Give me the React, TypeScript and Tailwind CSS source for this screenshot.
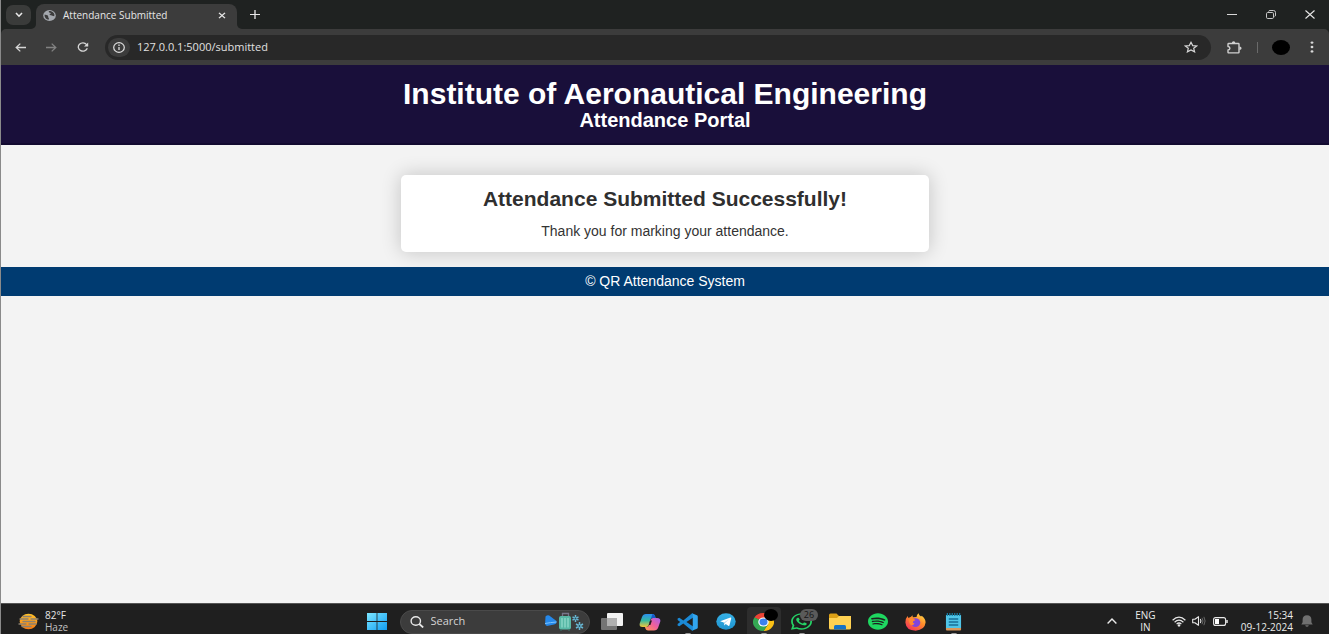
import React from 'react';
import { FaWhatsapp, FaSpotify } from 'react-icons/fa';

type Box = { className?: string; children: React.ReactNode; viewBox: string };

function Glyph({ className, children, viewBox }: Box) {
  return (
    <svg
      className={'block shrink-0 ' + (className ?? '')}
      viewBox={viewBox}
      preserveAspectRatio="none"
      fill="none"
      aria-hidden="true"
    >
      {children}
    </svg>
  );
}

function TabStrip() {
  return (
    <div className="flex h-[29px] items-stretch bg-[#1f2221] pl-[5px]">
      <button
        aria-label="Search tabs"
        className="mt-[5px] flex h-5 w-[25px] items-center justify-center rounded-[7px] bg-[#3a3b3a]"
      >
        <Glyph viewBox="0 0 8 6" className="h-[6px] w-2">
          <path d="M1 1l3 3.2L7 1" stroke="#e8e8e8" strokeWidth="1.6" />
        </Glyph>
      </button>
      <div className="flex w-[5px] items-end overflow-hidden bg-[#3c3c3c]">
        <span className="h-full w-full rounded-br-[5px] bg-[#1f2221]" />
      </div>
      <div className="flex bg-[#1f2221] pt-1">
        <div className="flex w-[201px] items-center rounded-t-[8px] bg-[#3c3c3c] pr-2 pb-[3px] pl-[7px]">
          <Glyph viewBox="0 0 14 12" className="h-[11px] w-[13px]">
            <ellipse cx="7" cy="6" rx="6.8" ry="5.9" fill="#a4a8ae" />
            <path d="M1.6 5.2c1.5.2 3 .2 3.8 1 .6.7-.4 1.4.4 2 .8.5.6 1.4.2 2.4C3.500 10.400 1.600 8.500 1.600 5.200z" fill="#3c3c3c" />
            <path d="M6.300 1.200c-.2 1.200 .2 1.800 1.400 1.700 1.200 0 .9 1-.2 1.300-.8.3-.4 1.500.8 1.500 1.600-.1 2 .9 3.800 1C13.100 4 10.500 1 6.300 1.200z" fill="#3c3c3c" />
          </Glyph>
          <span className="ml-[7px] flex-1 text-[10px] leading-4 whitespace-nowrap text-[#e6e6e6]">
            Attendance Submitted
          </span>
          <button aria-label="Close tab" className="flex h-4 w-[14px] items-center justify-center">
            <Glyph viewBox="0 0 8 8" className="h-[7px] w-2">
              <path d="M1 1l6 6M7 1L1 7" stroke="#e8e8e8" strokeWidth="1.4" />
            </Glyph>
          </button>
        </div>
      </div>
      <div className="flex w-[5px] bg-[#3c3c3c]">
        <span className="h-full w-full rounded-bl-[5px] bg-[#1f2221]" />
      </div>
      <button aria-label="New tab" className="flex w-[26px] items-center justify-center">
        <Glyph viewBox="0 0 10 10" className="h-[9px] w-[10px]">
          <path d="M5 0v10M0 5h10" stroke="#e8e8e8" strokeWidth="1.3" />
        </Glyph>
      </button>
      <div className="ml-auto flex items-stretch">
        <button aria-label="Minimize" className="flex w-[39px] items-center justify-center">
          <Glyph viewBox="0 0 10 1" className="h-px w-[10px]">
            <path d="M0 .5h10" stroke="#d8d8d8" strokeWidth="1" />
          </Glyph>
        </button>
        <button aria-label="Restore" className="flex w-[39px] items-center justify-center">
          <Glyph viewBox="0 0 10 9" className="h-[9px] w-[10px]">
            <rect x=".5" y="2.500" width="7" height="6" rx="1.200" stroke="#c8c8c8" />
            <path d="M2.500 1.500Q2.800.5 4 .5h3.500q2 0 2 2V5q0 1.300-1 1.700" stroke="#c8c8c8" />
          </Glyph>
        </button>
        <button aria-label="Close" className="flex w-[39px] items-center justify-center">
          <Glyph viewBox="0 0 10 9" className="h-[9px] w-[10px]">
            <path d="M.5.5l9 8M9.500.5l-9 8" stroke="#e8e8e8" strokeWidth="1.100" />
          </Glyph>
        </button>
      </div>
    </div>
  );
}

function Toolbar() {
  return (
    <div className="bg-[#1f2221]">
      <div className="flex h-9 items-center rounded-t-[5px] bg-[#3c3c3c] pl-1">
        <button aria-label="Back" className="flex h-6 w-[31px] items-center justify-center">
          <Glyph viewBox="0 0 11 9" className="h-[9px] w-[11px]">
            <path d="M11 4.500H1.200M5.300.6L1.200 4.500l4.100 3.900" stroke="#d6d6d6" strokeWidth="1.300" />
          </Glyph>
        </button>
        <button aria-label="Forward" disabled className="flex h-6 w-[31px] items-center justify-center">
          <Glyph viewBox="0 0 11 9" className="h-[9px] w-[11px]">
            <path d="M0 4.500h9.800M5.700.6l4.100 3.900-4.100 3.900" stroke="#828282" strokeWidth="1.300" />
          </Glyph>
        </button>
        <button aria-label="Reload" className="flex h-6 w-[31px] items-center justify-center">
          <Glyph viewBox="0 0 12 10" className="h-[10px] w-3">
            <path d="M10.300 6.200A4.600 4.100 0 1 1 9.600 2.600L10.800 3.900" stroke="#d6d6d6" strokeWidth="1.300" />
            <path d="M11.200.4v4H7z" fill="#d6d6d6" />
          </Glyph>
        </button>
        <div className="ml-[7px] flex h-[25px] flex-1 items-center rounded-full bg-[#282828] pr-[13px] pl-[3px]">
          <button
            aria-label="View site information"
            className="flex h-[19px] w-[22px] items-center justify-center rounded-full bg-[#3c3c3c]"
          >
            <Glyph viewBox="0 0 12 11" className="h-[11px] w-3">
              <ellipse cx="6" cy="5.500" rx="5.300" ry="4.800" stroke="#e0e0e0" strokeWidth="1.200" />
              <path d="M6 4.900v3.200M6 2.600v1.300" stroke="#e0e0e0" strokeWidth="1.300" />
            </Glyph>
          </button>
          <input
            aria-label="Address"
            defaultValue="127.0.0.1:5000/submitted"
            className="ml-[7px] h-5 min-w-0 flex-1 bg-transparent pb-px text-[11px] text-[#e0e0e0] outline-none"
          />
          <button aria-label="Bookmark this tab">
            <Glyph viewBox="0 0 14 12" className="h-3 w-[14px]">
              <path
                d="M7 1.300l1.700 3.300 4 .3-3 2.400.9 3.600L7 9l-3.600 1.900.9-3.600-3-2.400 4-.3z"
                stroke="#d6d6d6"
                strokeWidth="1.200"
              />
            </Glyph>
          </button>
        </div>
        <button aria-label="Extensions" className="ml-4">
          <Glyph viewBox="0 0 15 13" className="h-[13px] w-[15px]">
            <path
              d="M1.700 2.500h9.600q.7 0 .7.700v8q0 .7-.7.700H1.700q-.7 0-.7-.7V9q1.900-.1 1.900-1.700T1 5.500V3.200q0-.7.700-.7z"
              stroke="#d0d0d0"
              strokeWidth="1.400"
              strokeLinejoin="round"
            />
            <path d="M4.800 2.400a1.800 2.200 0 0 1 3.600 0zM12.400 5.400a2.200 1.800 0 0 1 0 3.600z" fill="#d0d0d0" />
          </Glyph>
        </button>
        <span className="ml-[15px] h-[11px] w-px bg-[#6a6a6a]" />
        <button aria-label="Profile" className="ml-[14px] h-[15px] w-[18px] rounded-[50%] bg-black" />
        <button aria-label="Menu" className="mr-[7px] ml-[12px] flex w-5 justify-center">
          <Glyph viewBox="0 0 4 12" className="h-3 w-1">
            <ellipse cx="2" cy="1.600" rx="1.400" ry="1.200" fill="#dadada" />
            <ellipse cx="2" cy="6" rx="1.400" ry="1.200" fill="#dadada" />
            <ellipse cx="2" cy="10.400" rx="1.400" ry="1.200" fill="#dadada" />
          </Glyph>
        </button>
      </div>
    </div>
  );
}

function Page() {
  return (
    <div className="flex-1 bg-[#f3f3f3] font-['Liberation_Sans',Arial,sans-serif]">
      <header className="border-b-2 border-[#120a30] bg-[#190f3a] pt-[13px] pb-[13px] text-center font-bold text-white">
        <h1 className="text-[30px] leading-8">Institute of Aeronautical Engineering</h1>
        <h2 className="text-[20px] leading-5">Attendance Portal</h2>
      </header>
      <main className="mx-auto mt-[30px] w-[528px] max-w-[90%] rounded-[5px] bg-white py-3 text-center text-[#333333] shadow-[0_0_20px_rgba(0,0,0,0.2)]">
        <h2 className="text-[21px] leading-6 font-bold text-[#2f2f2f]">Attendance Submitted Successfully!</h2>
        <p className="mt-3 text-[14px] leading-[17px]">Thank you for marking your attendance.</p>
      </main>
      <footer className="mt-[15px] bg-[#003b71] py-[6px] text-center text-[14px] leading-[17px] text-white">
        © QR Attendance System
      </footer>
    </div>
  );
}

function AppButton({
  label,
  children,
  active,
  running,
}: {
  label: string;
  children: React.ReactNode;
  active?: boolean;
  running?: boolean;
}) {
  return (
    <button aria-label={label} className="relative flex h-[35px] w-[38px] items-center justify-center">
      {active && <span className="absolute inset-x-[2px] top-[3px] bottom-0 rounded-[4px] bg-[#2d2d2d]" />}
      <span className="relative">{children}</span>
      {running && <span className="absolute top-[29px] left-[16px] h-[3px] w-[6px] rounded-full bg-[#9a9a9a]" />}
    </button>
  );
}

function Taskbar() {
  return (
    <div className="grid h-[31px] grid-cols-[1fr_auto_1fr] overflow-hidden border-t border-[#555555] bg-[#1f1f1f] pl-px">
      <button className="flex h-[34px] items-center pl-4 text-left text-[10px] leading-3 text-[#e6e6e6]">
        <Glyph viewBox="0 0 21 17" className="h-[17px] w-[21px]">
          <defs>
            <linearGradient id="sun" x1="0" y1="0" x2="0" y2="1">
              <stop offset="0" stopColor="#ffc229" />
              <stop offset="1" stopColor="#f57a12" />
            </linearGradient>
          </defs>
          <ellipse cx="10.500" cy="8.500" rx="8.800" ry="7.800" fill="url(#sun)" />
          <path
            d="M5 3.500h8M2 6h8M13 6h7M5 8.500h12M1 11h7M11 11h7M4 13.500h9"
            stroke="#8b8172"
            strokeWidth="1.300"
            strokeLinecap="round"
          />
        </Glyph>
        <span className="ml-[6px]">
          82°F
          <br />
          <span className="text-[#c0c0c0]">Haze</span>
        </span>
      </button>

      <div className="flex h-[35px] items-center">
        <button aria-label="Start" className="flex w-9 justify-center">
          <Glyph viewBox="0 0 20 17" className="h-[17px] w-5">
            <defs>
              <linearGradient id="start" x1="0" y1="0" x2="1" y2="1">
                <stop offset="0" stopColor="#7ce6ff" />
                <stop offset="1" stopColor="#109df2" />
              </linearGradient>
            </defs>
            <path d="M0 0h9.600v8.100H0zM10.400 0H20v8.100h-9.600zM0 8.900h9.600V17H0zM10.400 8.900H20V17h-9.600z" fill="url(#start)" />
          </Glyph>
        </button>
        <label className="mr-[3px] ml-[5px] flex h-6 w-[190px] items-center rounded-full border border-[#4a4a4a] bg-[#3c3c3c] pr-[5px] pl-[9px]">
          <Glyph viewBox="0 0 14 12" className="h-3 w-[14px]">
            <ellipse cx="5.800" cy="5" rx="4.700" ry="4.200" stroke="#e8e8e8" strokeWidth="1.400" />
            <path d="M9.300 8l3.900 3.500" stroke="#e8e8e8" strokeWidth="1.700" />
          </Glyph>
          <input
            aria-label="Search"
            placeholder="Search"
            className="ml-[7px] min-w-0 flex-1 bg-transparent text-[11px] text-white outline-none placeholder:text-[#d4d4d4]"
          />
          <Glyph viewBox="0 0 40 19" className="h-[19px] w-10">
            <path d="M1.500 4.500Q4 2 6.500 4.500L12.500 9Q13 12 10 12.500L3 14Q.8 13 1.200 10z" fill="#2588ea" />
            <path d="M1 11.500q5-1 11.500-1.500" stroke="#7cc4ff" strokeWidth="1" />
            <path d="M18.500 4.500V1.500h6v3" stroke="#77758a" strokeWidth="1.300" />
            <rect x="15" y="4" width="12" height="13.500" rx="2" fill="#58b8a6" />
            <path d="M18 6v9.500M21 6v9.500M24 6v9.500" stroke="#9be0d2" strokeWidth="1.100" />
            <path d="M17 17.500v1M25 17.500v1" stroke="#37756b" strokeWidth="2" />
            <path
              d="M31.500 3v7M28.500 4.800l6 3.400M34.500 4.800l-6 3.400M35.500 10v8M32 12l7 4M39 12l-7 4"
              stroke="#68b6d2"
              strokeWidth="1.500"
            />
            <circle cx="31.500" cy="6.500" r=".9" fill="#245064" />
            <circle cx="35.500" cy="14" r=".9" fill="#245064" />
          </Glyph>
        </label>

        <AppButton label="Task view">
          <Glyph viewBox="0 0 22 17" className="h-[17px] w-[22px]">
            <rect x="6" y="0" width="16" height="13" rx="1" fill="#f2f2f2" />
            <rect x="0" y="5" width="16" height="12" rx="1" fill="#747474" />
            <rect x="6" y="5" width="10" height="8" fill="#b0b0b0" />
          </Glyph>
        </AppButton>
        <AppButton label="Copilot">
          <Glyph viewBox="0 0 22 18" className="h-[18px] w-[22px]">
            <defs>
              <linearGradient id="cpa" x1="0" y1="0" x2="0" y2="1">
                <stop offset="0" stopColor="#2b8ff0" />
                <stop offset=".5" stopColor="#35b8a0" />
                <stop offset="1" stopColor="#f3c63a" />
              </linearGradient>
              <linearGradient id="cpb" x1="1" y1="0" x2="0" y2="1">
                <stop offset="0" stopColor="#a65ff0" />
                <stop offset=".5" stopColor="#f0609a" />
                <stop offset="1" stopColor="#ff9a52" />
              </linearGradient>
            </defs>
            <path d="M7 1h6.500q1.800 0 2.500 2l.6 2h-3.300q-1.500 0-2.100 2l-1.500 5q-.7 2-2.500 2H3.500Q0 14 .7 10.500L3 4Q4 1 7 1z" fill="url(#cpa)" />
            <path d="M15 17.500H9q-2 0-2.600-2L5.900 14h2q1.500 0 2.100-2l1.600-5q.7-2 2.400-2H18q4 0 3.300 3.600L19.200 14.500q-1 3-4.200 3z" fill="url(#cpb)" />
            <path d="M13.500 1q1.800 0 2.500 2l.6 2h-3.300q-1.200 0-1.700 1.200z" fill="#1758c8" />
            <path d="M11.200 7.500h1.800l-1.600 4.500H9.800z" fill="#1f1f1f" />
          </Glyph>
        </AppButton>
        <AppButton label="Visual Studio Code" running>
          <Glyph viewBox="0 0 100 100" className="h-[18px] w-[21px]">
            <path d="M72 1L30 41 11 26 3 30v9l12 11L3 61v9l8 4 19-15 42 40 5-3V75L45 50l32-25V4z" fill="#1b8ad6" />
            <path d="M71 1l24 11q4 2 4 7v62q0 5-4 7L71 99q4-2 4-7V8q0-5-4-7z" fill="#31a5ee" />
          </Glyph>
        </AppButton>
        <AppButton label="Telegram">
          <Glyph viewBox="0 0 20 17" className="h-[17px] w-5">
            <defs>
              <linearGradient id="tg" x1="0" y1="0" x2="0" y2="1">
                <stop offset="0" stopColor="#37b1e6" />
                <stop offset="1" stopColor="#1d93cf" />
              </linearGradient>
            </defs>
            <ellipse cx="10" cy="8.500" rx="9.700" ry="8.300" fill="url(#tg)" />
            <path d="M4.200 8.300l10.200-3.700q1-.2.800.8l-1.700 6.900q-.3.900-1.200.4l-2.600-1.700-1.400 1.400-.5-2.800z" fill="#fff" />
            <path d="M7.800 9.600l5-3.200-3.700 3.700-.8 2.200z" fill="#b5d9ee" />
          </Glyph>
        </AppButton>
        <AppButton label="Google Chrome" active running>
          <Glyph viewBox="0 0 24 24" className="h-[18px] w-[21px]">
            <path d="M12 12L1.600 6A12 12 0 0 1 22.400 6z" fill="#ea4335" />
            <path d="M12 12L22.400 6A12 12 0 0 1 12 24l5.200-9z" fill="#fbc116" />
            <path d="M12 12l5.200 3L12 24A12 12 0 0 1 1.600 6z" fill="#34a853" />
            <path d="M12 6h10.400L17 15z" fill="#fbc116" />
            <path d="M1.600 6L6.800 15 12 12z" fill="#34a853" />
            <circle cx="12" cy="12" r="6" fill="#fff" />
            <circle cx="12" cy="12" r="4.600" fill="#3b82ee" />
          </Glyph>
          <span className="absolute -top-[4px] left-[11px] h-3 w-[14px] rounded-[50%] bg-black" />
        </AppButton>
        <AppButton label="WhatsApp" running>
          <FaWhatsapp preserveAspectRatio="none" className="h-[19px] w-[21px] text-[#25d366]" />
          <span className="absolute -top-[3px] left-[9px] flex h-3 w-[18px] items-center justify-center rounded-full bg-[#5a5a5a] text-[9px] leading-3 text-[#161616]">
            26
          </span>
        </AppButton>
        <AppButton label="File Explorer">
          <Glyph viewBox="0 0 22 17" className="h-[17px] w-[22px]">
            <path d="M0 2Q0 .5 1.500.5h6L10 3h10q2 0 2 1.500V8H0z" fill="#dca016" />
            <path d="M0 5h8l2-2h12v12q0 1.500-1.500 1.500h-19Q0 16.500 0 15z" fill="#ffd152" />
            <path d="M5 16.500v-3q0-1.500 1.500-1.500h9q1.500 0 1.500 1.500v3z" fill="#1673c7" />
          </Glyph>
        </AppButton>
        <AppButton label="Spotify">
          <FaSpotify preserveAspectRatio="none" className="h-[17px] w-5 text-[#1ed760]" />
        </AppButton>
        <AppButton label="Firefox">
          <Glyph viewBox="0 0 21 18" className="h-[18px] w-[21px]">
            <defs>
              <linearGradient id="fx" x1=".9" y1="0" x2=".2" y2="1">
                <stop offset="0" stopColor="#ffe14a" />
                <stop offset=".45" stopColor="#ff8a2a" />
                <stop offset="1" stopColor="#f2305c" />
              </linearGradient>
            </defs>
            <path d="M2.600 3l.8 2L6 3.700l1.500-1.500.3 2.100 3.700-.2Q11.600 1.500 13.500.2q.5 2.200 2.600 3.400l.6-.8q4 3 3.900 6.800-.8 7.500-9.900 8.100Q1 17.500.4 9.500.3 5.500 2.600 3z" fill="url(#fx)" />
            <ellipse cx="10.500" cy="9.600" rx="4.800" ry="4.300" fill="#8045dc" />
            <path d="M3.500 6.500Q7 4.500 10.500 7L8 8.600q-.8 1.500 1.500 2-1 1.500-2.500 2Q4.300 11.800 3.500 6.500z" fill="#ff8730" />
          </Glyph>
        </AppButton>
        <AppButton label="Notepad" running>
          <Glyph viewBox="0 0 18 18" className="h-[18px] w-[17px]">
            <path d="M1 2h16v13H1z" fill="#50c5e7" />
            <path d="M1 15h16v1.500q0 1-1 1H2q-1 0-1-1z" fill="#d9975a" />
            <path d="M2.500 0v3M5.100 0v3M7.700 0v3M10.300 0v3M12.900 0v3M15.500 0v3" stroke="#177da5" strokeWidth="1.300" />
            <path d="M4 6h10M4 9h10M4 12h10" stroke="#176f98" strokeWidth="1.300" />
          </Glyph>
        </AppButton>
      </div>

      <div className="flex h-[34px] items-center justify-end pr-4 text-[10px] leading-3 text-[#ececec]">
        <button aria-label="Show hidden icons">
          <Glyph viewBox="0 0 10 6" className="h-[6px] w-[10px]">
            <path d="M.6 5.400L5 1l4.400 4.400" stroke="#e8e8e8" strokeWidth="1.400" />
          </Glyph>
        </button>
        <button className="ml-[18px] w-[21px] text-center">
          ENG
          <br />
          IN
        </button>
        <button aria-label="Network, sound and battery" className="ml-4 flex items-center">
          <Glyph viewBox="0 0 14 11" className="h-[11px] w-[14px]">
            <path d="M.6 4.200Q7-1.800 13.400 4.200M2.600 6.200Q7 2 11.400 6.200M4.600 8.200Q7 5.800 9.400 8.200" stroke="#e8e8e8" strokeWidth="1.200" />
            <ellipse cx="7" cy="9.400" rx="1.300" ry="1.200" fill="#e8e8e8" />
          </Glyph>
          <Glyph viewBox="0 0 14 10" className="ml-[6px] h-[10px] w-[14px]">
            <path d="M.7 3.300h2.200L6.500.7v8.600L2.900 6.700H.7z" stroke="#e8e8e8" strokeWidth="1.100" strokeLinejoin="round" />
            <path d="M8.300 3q1.300 2 0 4" stroke="#e8e8e8" strokeWidth="1.100" />
            <path d="M10 1.800q2 3.200 0 6.400M11.900.8q2.400 4.200 0 8.400" stroke="#666" strokeWidth="1" />
          </Glyph>
          <Glyph viewBox="0 0 15 9" className="ml-[7px] h-[9px] w-[15px]">
            <rect x=".6" y=".6" width="12" height="7.800" rx="2" stroke="#e8e8e8" strokeWidth="1.100" />
            <rect x="2" y="2" width="4" height="5" fill="#fff" />
            <path d="M14 3v3" stroke="#e8e8e8" strokeWidth="1.500" />
          </Glyph>
        </button>
        <button className="ml-[13px] text-right whitespace-nowrap">
          15:34
          <br />
          09-12-2024
        </button>
        <button aria-label="Notifications" className="ml-2">
          <Glyph viewBox="0 0 12 12" className="h-3 w-3">
            <path d="M6 .3q4.400.2 4.400 4.500v2.400l1.300 2.300H.3l1.300-2.300V4.800Q1.600.5 6 .3zM4.200 10.200h3.600Q7.400 11.800 6 11.800t-1.800-1.600z" fill="#707070" />
          </Glyph>
        </button>
      </div>
    </div>
  );
}

export default function App() {
  return (
    <div className="flex min-h-screen flex-col border-l border-[#8a8a8a] bg-[#1f2221] font-['Open_Sans','Noto_Sans',sans-serif]">
      <TabStrip />
      <Toolbar />
      <Page />
      <Taskbar />
    </div>
  );
}
